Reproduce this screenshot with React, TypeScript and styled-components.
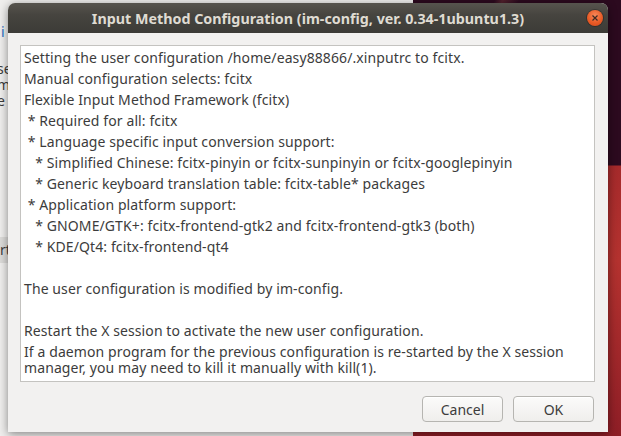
import React from "react";
import styled, { createGlobalStyle } from "styled-components";

const GlobalStyle = createGlobalStyle`
  html, body {
    margin: 0;
    padding: 0;
    overflow: hidden;
  }
`;

const Desktop = styled.div`
  position: relative;
  width: 621px;
  height: 436px;
  overflow: hidden;
  font-family: "Noto Sans", "Open Sans", sans-serif;
  background:
    linear-gradient(115deg, transparent 60%, rgba(255, 140, 110, 0.18) 61%, transparent 63%),
    linear-gradient(180deg, #2c0a1f 0, #2c0a1f 165px, #a52a2b 166px, #b4322f 260px, #8e1e26 436px);
`;

const BackWindow = styled.div`
  position: absolute;
  left: 0;
  top: 0;
  width: 413px;
  height: 436px;
  background: #efeeed;
  padding-top: 24px;
  box-sizing: border-box;
`;

const BackLine = styled.div<{ $blue?: boolean; $top?: number; $band?: boolean; $shift?: number }>`
  margin-left: ${(p) => p.$shift ?? -3}px;
  width: 8px;
  white-space: nowrap;
  font-size: 14px;
  line-height: 16px;
  margin-top: ${(p) => p.$top ?? 0}px;
  color: ${(p) => (p.$blue ? "#2a6fc4" : "#3c3c3c")};
  background: ${(p) => (p.$band ? "#dcdbd9" : "transparent")};
  padding: ${(p) => (p.$band ? "5px 0" : "0")};
`;

const Dialog = styled.div`
  position: absolute;
  left: 8px;
  top: 3px;
  width: 600px;
  height: 429px;
  display: flex;
  flex-direction: column;
  background: #f2f1f0;
  border-radius: 7px 7px 0 0;
  box-shadow: 0 2px 10px rgba(0, 0, 0, 0.45);
`;

const TitleBar = styled.div`
  position: relative;
  height: 30px;
  flex: none;
  display: flex;
  align-items: center;
  justify-content: center;
  border-radius: 7px 7px 0 0;
  background: linear-gradient(180deg, #57544e 0%, #46443f 40%, #3c3b37 100%);
  color: #dfdbd2;
  font-weight: bold;
  font-size: 14.3px;
`;

const CloseButton = styled.div`
  position: absolute;
  right: 5px;
  top: 7px;
  width: 16px;
  height: 16px;
  border-radius: 50%;
  background: radial-gradient(circle at 50% 35%, #f58a5d 0%, #e95b26 55%, #d2461a 100%);
  box-shadow: 0 0 0 1px rgba(0, 0, 0, 0.25);
  display: flex;
  align-items: center;
  justify-content: center;
`;

const Body = styled.div`
  flex: 1;
  display: flex;
  flex-direction: column;
  padding: 12px 13px 13px 12px;
  gap: 14px;
`;

const TextBox = styled.div`
  flex: 1;
  background: #ffffff;
  border: 1px solid #c4c3c0;
  padding: 4px 4px 0 3px;
  color: #3c3c3c;
  font-size: 14px;
  letter-spacing: 0.1px;
`;

const Para = styled.div`
  white-space: pre;
  line-height: 16px;
  min-height: 16px;
  margin-bottom: 5px;
`;

const ButtonRow = styled.div`
  display: flex;
  justify-content: flex-end;
  gap: 10px;
  padding-right: 1px;
`;

const Button = styled.button`
  width: 81px;
  height: 26px;
  border: 1px solid #b6b5b1;
  border-radius: 4px;
  background: linear-gradient(180deg, #fbfbfa 0%, #efeeec 100%);
  box-shadow: inset 0 1px 0 #ffffff;
  color: #3c3c3c;
  font-family: "Noto Sans", "Open Sans", sans-serif;
  font-size: 14px;
  padding: 0;
`;

const paragraphs = [
  ["Setting the user configuration /home/easy88866/.xinputrc to fcitx."],
  ["Manual configuration selects: fcitx"],
  ["Flexible Input Method Framework (fcitx)"],
  [" * Required for all: fcitx"],
  [" * Language specific input conversion support:"],
  ["   * Simplified Chinese: fcitx-pinyin or fcitx-sunpinyin or fcitx-googlepinyin"],
  ["   * Generic keyboard translation table: fcitx-table* packages"],
  [" * Application platform support:"],
  ["   * GNOME/GTK+: fcitx-frontend-gtk2 and fcitx-frontend-gtk3 (both)"],
  ["   * KDE/Qt4: fcitx-frontend-qt4"],
  [""],
  ["The user configuration is modified by im-config."],
  [""],
  ["Restart the X session to activate the new user configuration."],
  [
    "If a daemon program for the previous configuration is re-started by the X session",
    "manager, you may need to kill it manually with kill(1).",
  ],
];

const App = () => {
  return (
    <Desktop>
      <GlobalStyle />
      <BackWindow>
        <BackLine $blue $shift={1}>
          i
        </BackLine>
        <BackLine $top={21}>se</BackLine>
        <BackLine>m</BackLine>
        <BackLine>e</BackLine>
        <BackLine $top={128} $band $shift={0}>
          rt
        </BackLine>
      </BackWindow>
      <Dialog>
        <TitleBar>
          Input Method Configuration (im-config, ver. 0.34-1ubuntu1.3)
          <CloseButton>
            <svg width="8" height="8" viewBox="0 0 8 8">
              <path d="M1.5 1.5 L6.5 6.5 M6.5 1.5 L1.5 6.5" stroke="#3c2a22" strokeWidth="1.2" />
            </svg>
          </CloseButton>
        </TitleBar>
        <Body>
          <TextBox>
            {paragraphs.map((lines, i) => (
              <Para key={i}>{lines.join("\n")}</Para>
            ))}
          </TextBox>
          <ButtonRow>
            <Button>Cancel</Button>
            <Button>OK</Button>
          </ButtonRow>
        </Body>
      </Dialog>
    </Desktop>
  );
};

export default App;
